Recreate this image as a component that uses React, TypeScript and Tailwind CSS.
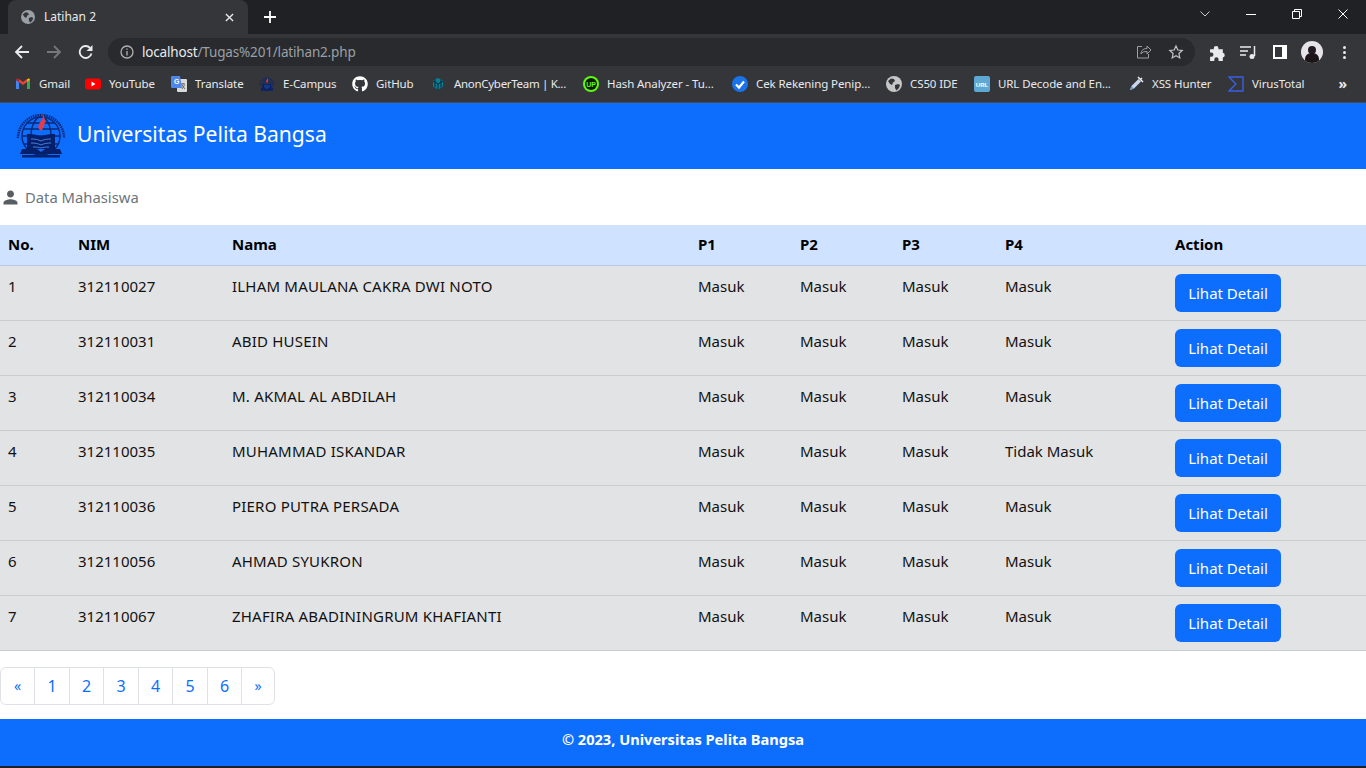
import { FaGithub } from "react-icons/fa";
import { MdPerson } from "react-icons/md";

const font = "font-['Noto_Sans','Open_Sans',sans-serif]";

function Globe({ className }: { className?: string }) {
  return (
    <svg viewBox="0 0 16 16" className={className}>
      <circle cx="8" cy="8" r="8" fill="currentColor" />
      <path d="M2 5l3-2.500 3 .5 1 2-2 1.500-1 2.500-2-1-2-3zM9 9l3-1 2 1-1 3-2.500 2.500L9 12z" fill="#35363a" />
    </svg>
  );
}

function Gmail() {
  return (
    <svg viewBox="0 0 16 16" className="w-4 h-4">
      <path d="M1 13V4l3 2v7z" fill="#4285f4" />
      <path d="M15 13V4l-3 2v7z" fill="#34a853" />
      <path d="M4 6l4 3 4-3V3l-4 3-4-3z" fill="#ea4335" />
      <path d="M1 4c0-1.200 1.400-1.800 2.300-1.100L4 3.400V6z" fill="#c5221f" />
      <path d="M15 4c0-1.200-1.400-1.800-2.300-1.100L12 3.400V6z" fill="#fbbc04" />
    </svg>
  );
}

function YouTube() {
  return (
    <svg viewBox="0 0 16 16" className="w-4 h-4">
      <rect x="0" y="2.500" width="16" height="11" rx="3" fill="#ff0000" />
      <path d="M6.500 5.500v5l4-2.500z" fill="#fff" />
    </svg>
  );
}

function TranslateIcon() {
  return (
    <svg viewBox="0 0 16 16" className="w-4 h-4">
      <rect x="6" y="3" width="10" height="13" rx="1" fill="#d9d9d9" />
      <path d="M1 0h8l2 12H1a1 1 0 0 1-1-1V1a1 1 0 0 1 1-1z" fill="#4f86ec" />
      <text x="3" y="8" fontSize="7" fontWeight="700" fill="#fff" fontFamily="Liberation Sans">G</text>
      <path d="M10 8h4M12 7v1M11 13l2.500-4M11 9l3 4" stroke="#666" strokeWidth="1" fill="none" />
    </svg>
  );
}

function CampusLogo({ className }: { className?: string }) {
  return (
    <svg viewBox="0 0 52 46" className={className}>
      {/* lettering ring */}
      <path d="M3 26A23 23 0 0 1 49 26" fill="none" stroke="#08287a" strokeWidth="2.400" strokeDasharray="1.500 .8" />
      {/* globe */}
      <g fill="none" stroke="#08287a" strokeWidth="1.400">
        <circle cx="26" cy="24" r="19" />
        <ellipse cx="26" cy="24" rx="10" ry="19" />
        <path d="M8 17h36M12 11h28M7 24h38M9 32h34" />
      </g>
      {/* flame */}
      <path d="M24 17c-2-4 1-6 3-9 1-2 1-4 0-6 3 3 4 8 2 12-1 2-2 3-2 5l-2-1z" fill="#e23c4a" />
      {/* building */}
      <path d="M12 22c5 0 10 .5 14 2.500 4-2 9-2.500 14-2.500v15H12z" fill="#04206c" />
      <path d="M16 27c4 0 7 .5 10 2 3-1.500 6-2 10-2M16 31c4 0 7 .5 10 2 3-1.500 6-2 10-2M18 35c3 0 6 .2 8 1 2-.8 5-1 8-1" stroke="#4c7fd6" strokeWidth="1" fill="none" />
      {/* book */}
      <path d="M7 37h15l4 3 4-3h15l2 5H5z" fill="#04206c" />
      <rect x="7" y="43" width="38" height="2.500" fill="#04206c" />
    </svg>
  );
}

function Check() {
  return (
    <svg viewBox="0 0 16 16" className="w-4 h-4">
      <circle cx="8" cy="8" r="8" fill="#1a73e8" />
      <path d="M4 8.500l3 3 5-6" stroke="#fff" strokeWidth="2.200" fill="none" />
    </svg>
  );
}

const bookmarks = [
  { name: "Gmail", icon: <Gmail />, w: "w-[70px]", cls: "-ml-px" },
  { name: "YouTube", icon: <YouTube />, w: "w-[86px]", cls: "" },
  { name: "Translate", icon: <TranslateIcon />, w: "w-[88px]", cls: "" },
  { name: "E-Campus", icon: <CampusLogo className="w-4 h-4" />, w: "w-[93px]", cls: "-ml-px" },
  { name: "GitHub", icon: <FaGithub className="w-4 h-4 text-white" />, w: "w-[78px]", cls: "" },
  {
    name: "AnonCyberTeam | K...",
    icon: (
      <svg viewBox="0 0 16 16" className="w-4 h-4">
        <path d="M8 2l5 2.500v6L8 14l-5-3.500v-6z" fill="#0e7c93" />
        <path d="M3 5l5 3 5-3M8 8v6M5 3.500v8M11 3.500v8" stroke="#052b36" strokeWidth="1" fill="none" />
      </svg>
    ),
    w: "w-[153px]",
    cls: "tracking-[-0.3px]",
  },
  {
    name: "Hash Analyzer - Tu...",
    icon: (
      <svg viewBox="0 0 16 16" className="w-4 h-4">
        <circle cx="8" cy="8" r="8" fill="#5dfc0a" />
        <circle cx="8" cy="8" r="6" fill="#0c1a06" />
        <text x="8" y="10.500" textAnchor="middle" fontSize="7" fontWeight="700" fill="#5dfc0a" fontFamily="Liberation Sans">UP</text>
      </svg>
    ),
    w: "w-[149px]",
    cls: "",
  },
  { name: "Cek Rekening Penip...", icon: <Check />, w: "w-[154px]", cls: "" },
  { name: "CS50 IDE", icon: <Globe className="w-4 h-4 text-[#c4c7c5]" />, w: "w-[88px]", cls: "" },
  {
    name: "URL Decode and En...",
    icon: (
      <svg viewBox="0 0 16 16" className="w-4 h-4">
        <rect width="16" height="16" rx="2" fill="#5fa8d3" />
        <text x="8" y="10.500" textAnchor="middle" fontSize="6" fontWeight="700" fill="#fff" fontFamily="Liberation Sans">URL</text>
      </svg>
    ),
    w: "w-[154px]",
    cls: "",
  },
  {
    name: "XSS Hunter",
    icon: (
      <svg viewBox="0 0 16 16" className="w-4 h-4">
        <path d="M2 14l1.500-4 7-7 2.500 2.500-7 7z" fill="#c8d8ec" />
        <path d="M10 1l5 5M12 4l2-2" stroke="#e8eef5" strokeWidth="1.500" />
        <path d="M2 14l1.500-4 2.500 2.500z" fill="#6b9bd2" />
      </svg>
    ),
    w: "w-[100px]",
    cls: "",
  },
  {
    name: "VirusTotal",
    icon: (
      <svg viewBox="0 0 16 16" className="w-4 h-4">
        <path d="M1 1h14v14H1l7-7z" fill="none" stroke="#3b5fe0" strokeWidth="1.400" />
      </svg>
    ),
    w: "w-[92px]",
    cls: "",
  },
];

const rows = [
  ["1", "312110027", "ILHAM MAULANA CAKRA DWI NOTO", "Masuk"],
  ["2", "312110031", "ABID HUSEIN", "Masuk"],
  ["3", "312110034", "M. AKMAL AL ABDILAH", "Masuk"],
  ["4", "312110035", "MUHAMMAD ISKANDAR", "Tidak Masuk"],
  ["5", "312110036", "PIERO PUTRA PERSADA", "Masuk"],
  ["6", "312110056", "AHMAD SYUKRON", "Masuk"],
  ["7", "312110067", "ZHAFIRA ABADININGRUM KHAFIANTI", "Masuk"],
];

const pages = [
  { label: "«", w: "w-[35px]", cls: "rounded-l-md text-sm" },
  { label: "1", w: "w-[36px]", cls: "" },
  { label: "2", w: "w-[35px]", cls: "" },
  { label: "3", w: "w-[36px]", cls: "" },
  { label: "4", w: "w-[35px]", cls: "" },
  { label: "5", w: "w-[36px]", cls: "" },
  { label: "6", w: "w-[35px]", cls: "" },
  { label: "»", w: "w-[34px]", cls: "rounded-r-md text-sm" },
];

function BrowserChrome() {
  return (
    <div className="h-[103px] bg-[#35363a] border-b border-[#4a4b4f] text-white font-['Noto_Sans',sans-serif]">
      {/* tab strip */}
      <div className="h-[34px] bg-[#202124] flex items-end pl-2">
        <div className="w-[240px] h-[34px] bg-[#35363a] rounded-t-lg flex items-center pl-[13px] pr-[14px]">
          <Globe className="w-[14px] h-[14px] text-[#9aa0a6]" />
          <span className="ml-[9px] text-xs text-[#e8eaed] flex-1">Latihan 2</span>
          <svg viewBox="0 0 10 10" className="w-[9px] h-[9px]">
            <path d="M1 1l8 8M9 1l-8 8" stroke="#e8eaed" strokeWidth="1.500" />
          </svg>
        </div>
        <div className="h-[34px] flex items-center ml-[16px]">
          <svg viewBox="0 0 12 12" className="w-3 h-3">
            <path d="M6 0v12M0 6h12" stroke="#fff" strokeWidth="1.800" />
          </svg>
        </div>
        <div className="flex-1" />
        <div className="h-[34px] flex items-center pr-[18px] gap-[36px] pb-[6px]">
          <svg viewBox="0 0 10 6" className="w-[10px] h-[6px]">
            <path d="M.5.5L5 5 9.500.5" stroke="#c8c9cb" fill="none" />
          </svg>
          <div className="w-[10px] h-px bg-white" />
          <svg viewBox="0 0 10 10" className="w-[10px] h-[10px]">
            <path d="M.5 2.500h7v7h-7zM2.500 2.500v-2h7v7h-2" stroke="#fff" fill="none" />
          </svg>
          <svg viewBox="0 0 10 10" className="w-[10px] h-[10px]">
            <path d="M.5.500l9 9M9.500.500l-9 9" stroke="#fff" />
          </svg>
        </div>
      </div>
      {/* toolbar */}
      <div className="h-[34px] flex items-center pt-[2px] pl-[14px]">
        <svg viewBox="0 0 16 16" className="w-4 h-4">
          <path d="M15 8H2M8 2L2 8l6 6" stroke="#e8eaed" strokeWidth="1.800" fill="none" />
        </svg>
        <svg viewBox="0 0 16 16" className="w-4 h-4 ml-4">
          <path d="M1 8h13M8 2l6 6-6 6" stroke="#76777a" strokeWidth="1.800" fill="none" />
        </svg>
        <svg viewBox="0 0 16 16" className="w-4 h-4 ml-4">
          <path d="M13.500 9.500A6 6 0 1 1 12 3.800" stroke="#e8eaed" strokeWidth="1.800" fill="none" />
          <path d="M14.500 1v6h-6z" fill="#e8eaed" />
        </svg>
        <div className="ml-[14px] w-[1087px] h-7 rounded-full bg-[#292a2d] flex items-center pl-[12px] pr-[11px]">
          <svg viewBox="0 0 14 14" className="w-[14px] h-[14px]">
            <circle cx="7" cy="7" r="6" stroke="#b0b2b5" strokeWidth="1.300" fill="none" />
            <path d="M7 6v4.500M7 3.500v1.300" stroke="#b0b2b5" strokeWidth="1.300" />
          </svg>
          <span className="ml-[8px] text-[13.500px] tracking-[-0.17px]">
            <span className="text-[#e8eaed]">localhost</span>
            <span className="text-[#9aa0a6]">/Tugas%201/latihan2.php</span>
          </span>
          <div className="flex-1" />
          <svg viewBox="0 0 16 16" className="w-4 h-4">
            <path d="M6 2.500H1.500v11.500h11V10M5 10c0-4 3-5.500 6-5.500V2l4 4-4 4V7.500c-3 0-5 .5-6 2.500z" stroke="#9aa0a6" fill="none" />
          </svg>
          <svg viewBox="0 0 16 16" className="w-4 h-4 ml-[16px]">
            <path d="M8 2l1.800 4 4.400.5-3.300 3 .9 4.400L8 11.700l-3.800 2.200.9-4.400-3.300-3L6.200 6z" stroke="#c4c6c9" strokeWidth="1.200" fill="none" />
          </svg>
        </div>
        <svg viewBox="0 0 16 16" className="w-[17px] h-[17px] ml-[14px]">
          <path d="M1 5h3.500V4a2.200 2.200 0 0 1 4.400 0v1H13v3.300a2.300 2.300 0 0 1 0 4.500V16H9v-1.500a2 2 0 0 0-4 0V16H1v-4h1.200a2 2 0 0 0 0-4H1z" fill="#e8eaed" />
        </svg>
        <svg viewBox="0 0 16 16" className="w-4 h-4 ml-[14px]">
          <path d="M0 3h11M0 7h8M0 11h6" stroke="#e8eaed" strokeWidth="1.400" />
          <path d="M14.500 2v10" stroke="#e8eaed" strokeWidth="1.500" />
          <circle cx="12" cy="12.500" r="2.500" fill="#e8eaed" />
        </svg>
        <div className="ml-[17px] w-[14px] h-[14px] border-2 border-white bg-white flex justify-start">
          <div className="w-[7px] h-full bg-[#35363a]" />
        </div>
        <div className="ml-[14px] w-[22px] h-[22px] rounded-full bg-[#e6e4e6] overflow-hidden flex flex-col items-center justify-end">
          <div className="w-2 h-2 rounded-full bg-[#221a20] -mb-px" />
          <div className="w-[14px] h-[10px] rounded-t-md bg-[#1d1418]" />
        </div>
        <div className="ml-[20px] flex flex-col gap-[2px]">
          <div className="w-[3px] h-[3px] rounded-full bg-[#e8eaed]" />
          <div className="w-[3px] h-[3px] rounded-full bg-[#e8eaed]" />
          <div className="w-[3px] h-[3px] rounded-full bg-[#e8eaed]" />
        </div>
      </div>
      {/* bookmarks bar */}
      <div className="h-[34px] flex items-center pb-[2px] pl-[15px]">
        {bookmarks.map((b) => (
          <div key={b.name} className={`${b.w} flex items-center shrink-0`}>
            {b.icon}
            <span className={`ml-2 text-[11.500px] tracking-[-0.1px] text-[#e8eaed] whitespace-nowrap ${b.cls}`}>{b.name}</span>
          </div>
        ))}
        <div className="flex-1" />
        <span className="pr-[19px] text-sm font-bold text-[#e8eaed] leading-none">»</span>
      </div>
    </div>
  );
}

export default function App() {
  return (
    <div className={`h-[768px] overflow-hidden flex flex-col bg-white ${font}`}>
      <BrowserChrome />

      <nav className="h-[66px] bg-[#0d6efd] flex items-center pl-[15px]">
        <CampusLogo className="w-[52px] h-[46px] mb-[2px]" />
        <span className="ml-[10px] pb-[4px] text-[21.100px] text-white">Universitas Pelita Bangsa</span>
      </nav>

      <div className="h-[56px] flex items-center text-[#6c757d]">
        <MdPerson className="w-[21px] h-[21px] text-[#565e64]" />
        <span className="ml-[4px] text-[14.800px]">Data Mahasiswa</span>
      </div>

      <table className="w-full table-fixed border-collapse text-[15px] text-[#111]">
        <colgroup>
          <col className="w-[70px]" />
          <col className="w-[154px]" />
          <col className="w-[466px]" />
          <col className="w-[102px]" />
          <col className="w-[102px]" />
          <col className="w-[103px]" />
          <col className="w-[170px]" />
          <col />
        </colgroup>
        <thead>
          <tr className="h-[40px] bg-[#cfe2ff] border-b border-[#bacbe6] text-black">
            <th className="px-2 pb-[2px] text-left font-bold">No.</th>
            <th className="px-2 pb-[2px] text-left font-bold">NIM</th>
            <th className="px-2 pb-[2px] text-left font-bold">Nama</th>
            <th className="px-2 pb-[2px] text-left font-bold">P1</th>
            <th className="px-2 pb-[2px] text-left font-bold">P2</th>
            <th className="px-2 pb-[2px] text-left font-bold">P3</th>
            <th className="px-2 pb-[2px] text-left font-bold">P4</th>
            <th className="px-2 pb-[2px] text-left font-bold">Action</th>
          </tr>
        </thead>
        <tbody>
          {rows.map((r) => (
            <tr key={r[0]} className="h-[55px] bg-[#e2e3e5] border-b border-[#cbccce]">
              <td className="px-2 pt-[9px] align-top">{r[0]}</td>
              <td className="px-2 pt-[9px] align-top">{r[1]}</td>
              <td className="px-2 pt-[9px] align-top whitespace-nowrap tracking-[0.2px]">{r[2]}</td>
              <td className="px-2 pt-[9px] align-top">Masuk</td>
              <td className="px-2 pt-[9px] align-top">Masuk</td>
              <td className="px-2 pt-[9px] align-top">Masuk</td>
              <td className="px-2 pt-[9px] align-top">{r[3]}</td>
              <td className="px-2 pt-2 align-top">
                <button className="w-[106px] h-[38px] pt-px rounded-md bg-[#0d6efd] text-white text-[15px]">Lihat Detail</button>
              </td>
            </tr>
          ))}
        </tbody>
      </table>

      <div className="pt-4 flex-1">
        <ul className="flex h-[38px] w-max">
          {pages.map((p, i) => (
            <li
              key={p.label}
              className={`${p.w} ${p.cls} flex items-center justify-center border border-[#dee2e6] text-[#0d6efd] ${i > 0 ? "-ml-px" : ""}`}
            >
              {p.label}
            </li>
          ))}
        </ul>
      </div>

      <footer className="h-[47px] pb-[5px] bg-[#0d6efd] flex items-center justify-center text-[14.600px] font-bold text-white">
        © 2023, Universitas Pelita Bangsa
      </footer>
      <div className="h-[2px] bg-[#202124]" />
    </div>
  );
}
